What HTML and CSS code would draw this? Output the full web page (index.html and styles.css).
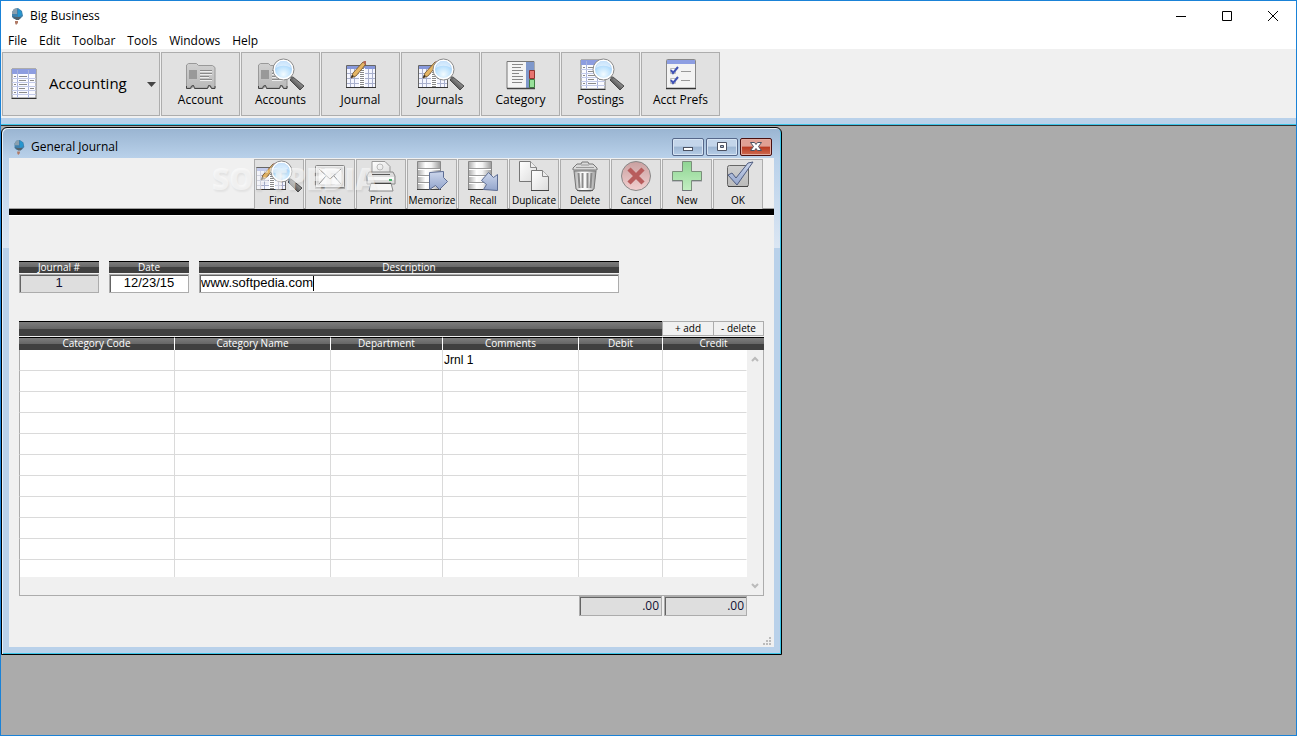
FILE: index.html
```
<!DOCTYPE html>
<html lang="en">
<head>
    <meta charset="utf-8">
    <title>Big Business</title>
    <meta name="viewport" content="width=device-width, initial-scale=1.0">
    <link rel="stylesheet" href="styles.css">
</head>
<body>
    <svg class="sprite" aria-hidden="true">
        <defs>
            <linearGradient id="gGray" x1="0" y1="0" x2="0" y2="1"><stop offset="0" stop-color="#d0d0d0"/><stop offset="1" stop-color="#bababa"/></linearGradient>
            <linearGradient id="gPaper" x1="0" y1="0" x2="1" y2="1"><stop offset="0" stop-color="#fff"/><stop offset="1" stop-color="#dcdcdc"/></linearGradient>
            <linearGradient id="gBlue" x1="0" y1="0" x2="0" y2="1"><stop offset="0" stop-color="#cdd7ec"/><stop offset="1" stop-color="#93a5cc"/></linearGradient>
            <linearGradient id="gGreen" x1="0" y1="0" x2="0" y2="1"><stop offset="0" stop-color="#8fd593"/><stop offset="1" stop-color="#c3efc2"/></linearGradient>
            <linearGradient id="gRed" x1="0" y1="0" x2="0" y2="1"><stop offset="0" stop-color="#c9a0a0"/><stop offset="1" stop-color="#f2d0d0"/></linearGradient>
            <linearGradient id="gDisk" x1="0" y1="0" x2="1" y2="0"><stop offset="0" stop-color="#aaa"/><stop offset=".35" stop-color="#fff"/><stop offset=".6" stop-color="#f4f4f4"/><stop offset="1" stop-color="#999"/></linearGradient>
            <linearGradient id="gHandle" x1="0" y1="1" x2="1" y2="0"><stop offset="0" stop-color="#111"/><stop offset=".6" stop-color="#888"/><stop offset="1" stop-color="#333"/></linearGradient>
            <radialGradient id="gGlass" cx=".5" cy=".75" r=".75"><stop offset="0" stop-color="#f4fcff"/><stop offset=".5" stop-color="#bfe3fd"/><stop offset="1" stop-color="#85bdf5"/></radialGradient>
        </defs>
        <symbol id="logo" viewBox="0 0 16 18">
            <path d="M3 5l2-3 4-1 4 3 1 5-3 3H5L3 10z" fill="#3f81ad"/>
            <path d="M3 5l2-3 3-1v6H3z" fill="#8a9fae"/>
            <path d="M9 2l3 2 1 4-4 2z" fill="#2696cf"/>
            <path d="M3 9l3 1h6l-2 3H7z" fill="#53616b"/>
            <path d="M6 14h3v2l-2 2-1-2z" fill="#b07a66"/>
        </symbol>
        <symbol id="lens" viewBox="0 0 48 34">
            <path d="M36 19l11 9-4 4-10-10z" fill="url(#gHandle)" stroke="#333" stroke-width=".8"/>
            <path d="M32 17l4 4" stroke="#666" stroke-width="3"/>
            <circle cx="26.500" cy="11.500" r="9.500" fill="url(#gGlass)" stroke="#fff" stroke-width="2"/>
            <circle cx="26.500" cy="11.500" r="10.500" fill="none" stroke="#8a8a8a"/>
            <path d="M19 10a7.500 7 0 0 1 15 0c-5-3-10-3-15 0z" fill="#fff" opacity=".5"/>
        </symbol>
        <symbol id="folder" viewBox="0 0 48 34">
            <path d="M9.500 30V7l2-1.500h8l2 2h14l2.500 2V30h-4l-1-3-2 3H18l-2-3-1 3z" fill="url(#gGray)" stroke="#999"/>
            <path d="M9.500 28v2.500h4l1-2.500 2-.5 1 3h13l1-3 2 .5 1 2.500h3.500V28" fill="none" stroke="#444"/>
            <path d="M12 12h8v9h-8z" fill="#999"/>
            <path d="M23 12.500h12M23 15.500h12M23 18.500h9M23 21.500h12" stroke="#8a8a8a"/>
            <path d="M23 13.500h12M23 16.500h12M23 19.500h9M23 22.500h12" stroke="#eee"/>
        </symbol>
        <symbol id="ledger" viewBox="0 0 48 34">
            <path d="M9.500 7.500h29v22h-29z" fill="#f5f6ff" stroke="#666"/>
            <path d="M10 8h28v3H10z" fill="#8798da"/>
            <path d="M10 15.500h28M10 20.500h28M10 25.500h28M13.500 11v18M17.500 11v18M31.500 11v18M35.500 11v18" stroke="#a9b0cd"/>
            <path d="M9 29.500h30" stroke="#333"/>
            <path d="M25 10v19" stroke="#fff" stroke-width="6"/>
            <path d="M25 10v19" stroke="#888" stroke-width="4" stroke-dasharray="1 1"/>
            <path d="M14 20l2-5L26 4l3 2-10 12z" fill="#e5b565" stroke="#6d4d22" stroke-width=".8"/>
            <path d="M26 4l1-1h2v2l-1 2z" fill="#b5685a"/>
            <path d="M14 20l1-3 2 1z" fill="#222"/>
        </symbol>
        <symbol id="sheet" viewBox="0 0 48 34">
            <path d="M12 2h24v29H12z" fill="#fbfbff" stroke="#777"/>
            <path d="M12 2h24v5H12z" fill="#8d9de0"/>
            <path d="M17.500 3v28M28.500 3v28" stroke="#aab4dc"/>
            <path d="M12 11.500h24M12 15.500h24M12 19.500h24M12 23.500h24M12 27.500h24" stroke="#c3cae8"/>
            <path d="M19 9.500h8M19 13.500h7M19 17.500h8M19 21.500h6M19 25.500h8M30 13.500h4M30 21.500h4M14 9.500h2M14 17.500h2M14 25.500h2" stroke="#8a8a8a"/>
            <path d="M11.500 31.500h25" stroke="#333"/>
        </symbol>
        <symbol id="find" viewBox="0 0 48 34">
            <use href="#ledger" x="-8" y="0" width="48" height="34"/>
            <use href="#lens" width="48" height="34"/>
        </symbol>
        <symbol id="accounts" viewBox="0 0 48 34">
            <use href="#folder" x="-8" y="0" width="48" height="34"/>
            <use href="#lens" width="48" height="34"/>
        </symbol>
        <symbol id="postings" viewBox="0 0 48 34">
            <use href="#sheet" x="-8" y="0" width="48" height="34"/>
            <use href="#lens" width="48" height="34"/>
        </symbol>
        <symbol id="category" viewBox="0 0 48 34">
            <path d="M10 3.500h27v27H10z" fill="#f4f4f4" stroke="#777"/>
            <path d="M29 4h8v26h-8z" fill="#7f98cb"/>
            <path d="M32.500 12.500h5v8h-5z" fill="#e87470" stroke="#8f3330"/>
            <path d="M32.500 21.500h5v8h-5z" fill="#98e09a" stroke="#3f7f42"/>
            <path d="M15 6.500h11M15 9.500h9M15 12.500h11M15 15.500h7M15 18.500h11M15 21.500h11M15 24.500h10" stroke="#888"/>
            <path d="M10 30.500h28" stroke="#444" stroke-width="1.500"/>
        </symbol>
        <symbol id="prefs" viewBox="0 0 48 34">
            <rect x="9.500" y="1.500" width="29" height="29" rx="1" fill="#f3f3f3" stroke="#888"/>
            <path d="M10 2h28v4H10z" fill="#8d9ee2"/>
            <path d="M9 30.500h30" stroke="#333" stroke-width="1.500"/>
            <path d="M13.500 10.500h5v5h-5zM13.500 20.500h5v5h-5z" fill="#fff" stroke="#bbb"/>
            <path d="M14 12l2 3 5-6M14 22l2 3 5-6" fill="none" stroke="#4052b4" stroke-width="2"/>
            <path d="M24 13.500h10M24 22.500h9" stroke="#999"/>
        </symbol>
        <symbol id="note" viewBox="0 0 48 34">
            <rect x="9.500" y="5.500" width="29" height="22" rx="1" fill="#ececec" stroke="#888"/>
            <rect x="12" y="8" width="24" height="17" fill="#fafafa" stroke="#ccc"/>
            <path d="M13 9l11 10L35 9M13 24l7-8M35 24l-7-8" fill="none" stroke="#999"/>
            <path d="M9 28h30" stroke="#777"/>
        </symbol>
        <symbol id="print" viewBox="0 0 48 34">
            <path d="M15 14V1.500h13l5 5V14z" fill="url(#gPaper)" stroke="#999"/>
            <circle cx="23" cy="7" r="3" fill="none" stroke="#bbb"/>
            <path d="M12 12h24l2 4v8H10v-8z" fill="#ddd" stroke="#888"/>
            <path d="M15 14.500h18" stroke="#555"/>
            <path d="M11 17h26v3H11z" fill="#f8f8f8"/>
            <path d="M32 20h3" stroke="#49b36b" stroke-width="2"/>
            <path d="M14 23h20l2 8H12z" fill="#f6f6f6" stroke="#888"/>
            <path d="M14 23.500h20" stroke="#444"/>
        </symbol>
        <symbol id="disk" viewBox="0 0 48 34">
            <path d="M9.500 1.500h23v28h-23z" fill="url(#gDisk)" stroke="#888"/>
            <path d="M10 8.500h22M10 15.500h22M10 22.500h22" stroke="#999"/>
            <path d="M10 9.500h22M10 16.500h22M10 23.500h22" stroke="#fff"/>
            <path d="M9 29.500h24" stroke="#444"/>
        </symbol>
        <symbol id="memorize" viewBox="0 0 48 34">
            <use href="#disk" width="48" height="34"/>
            <path d="M21.500 12.500l14-1v6l4 4-8 8-4-4-6 4z" fill="url(#gBlue)" stroke="#5d6d94"/>
        </symbol>
        <symbol id="recall" viewBox="0 0 48 34">
            <use href="#disk" width="48" height="34"/>
            <path d="M38.500 30.500l-14-1 3-5-5-4 7-8 5 5 4-3z" fill="url(#gBlue)" stroke="#5d6d94"/>
        </symbol>
        <symbol id="duplicate" viewBox="0 0 48 34">
            <path d="M9.500 1.500h11l6 6v14h-17z" fill="url(#gPaper)" stroke="#777"/>
            <path d="M20.500 1.500v6h6" fill="#eee" stroke="#888"/>
            <path d="M21.500 10.500h11l6 6v14h-17z" fill="url(#gPaper)" stroke="#777"/>
            <path d="M32.500 10.500v6h6" fill="#eee" stroke="#888"/>
            <path d="M21 30.500h18" stroke="#444"/>
        </symbol>
        <symbol id="trash" viewBox="0 0 48 34">
            <path d="M13 11h22l-2 18-3 2H18l-3-2z" fill="url(#gDisk)" stroke="#777"/>
            <path d="M17.500 13l1 15M21.500 13v15M26.500 13v15M30.500 13l-1 15" stroke="#8a8a8a" stroke-width="2"/>
            <path d="M12 10V8l4-4h4l1-2h6l1 2h4l4 4v2z" fill="#d9d9d9" stroke="#777"/>
            <path d="M20 5h8M15 7.500h18" stroke="#999"/>
            <path d="M16 30.500h16" stroke="#555"/>
        </symbol>
        <symbol id="cancel" viewBox="0 0 48 34">
            <circle cx="24" cy="16" r="14.500" fill="url(#gRed)" stroke="#888"/>
            <path d="M17 9l14 14M31 9L17 23" stroke="#b85c5c" stroke-width="4.500"/>
        </symbol>
        <symbol id="new" viewBox="0 0 48 34">
            <path d="M19.500 1.500h9v10h10v9h-10v10h-9v-10h-10v-9h10z" fill="url(#gGreen)" stroke="#7b8f7b"/>
            <path d="M19 30.500h10M9 21h10M29 21h10" stroke="#667" opacity=".6"/>
        </symbol>
        <symbol id="ok" viewBox="0 0 48 34">
            <rect x="13.500" y="5.500" width="21" height="21" rx="2" fill="url(#gGray)" stroke="#666"/>
            <path d="M14 26.500h20" stroke="#444"/>
            <path d="M14 15l4-2 4 5L34 3l5-1-16 23z" fill="url(#gBlue)" stroke="#4f5c80"/>
        </symbol>
    </svg>

    <header class="titlebar">
        <svg class="logo"><use href="#logo"/></svg>
        <h1>Big Business</h1>
        <div class="sysbuttons">
            <button aria-label="Minimize"><svg viewBox="0 0 10 10"><path d="M0 5.500h10"/></svg></button>
            <button aria-label="Maximize"><svg viewBox="0 0 10 10"><path d="M.5.5h9v9h-9z"/></svg></button>
            <button aria-label="Close"><svg viewBox="0 0 10 10"><path d="M0 0l10 10M10 0L0 10"/></svg></button>
        </div>
    </header>
    <nav class="menubar">
        <button>File</button>
        <button>Edit</button>
        <button>Toolbar</button>
        <button>Tools</button>
        <button>Windows</button>
        <button>Help</button>
    </nav>
    <div class="toolbar">
        <div class="module">
            <svg class="icon-module" viewBox="11 1 26 32"><use href="#sheet" width="48" height="34"/></svg>
            <select aria-label="Module">
                <option>Accounting</option>
            </select>
            <svg class="arrow" viewBox="0 0 9 5"><path d="M0 0h9L4.500 5z"/></svg>
        </div>
        <button class="tool"><svg class="icon"><use href="#folder"/></svg>Account</button>
        <button class="tool"><svg class="icon"><use href="#accounts"/></svg>Accounts</button>
        <button class="tool"><svg class="icon"><use href="#ledger"/></svg>Journal</button>
        <button class="tool"><svg class="icon"><use href="#find"/></svg>Journals</button>
        <button class="tool"><svg class="icon"><use href="#category"/></svg>Category</button>
        <button class="tool"><svg class="icon"><use href="#postings"/></svg>Postings</button>
        <button class="tool"><svg class="icon"><use href="#prefs"/></svg>Acct Prefs</button>
    </div>

    <main class="desktop">
        <section class="window">
            <div class="window-title">
                <svg class="logo"><use href="#logo"/></svg>
                <h2>General Journal</h2>
                <button class="cap" aria-label="Minimize"><svg viewBox="0 0 12 10"><rect x="1.500" y="5.500" width="9" height="3"/></svg></button>
                <button class="cap" aria-label="Maximize"><svg viewBox="0 0 12 10"><path d="M1.500.5h9v8h-9z"/><path class="hole" d="M4.500 3.500h3v2h-3z"/></svg></button>
                <button class="cap close" aria-label="Close"><svg viewBox="0 0 12 10"><path d="M.5.5h4L6 2.500l1.500-2h4L8.500 4.500l3 4h-4L6 6.500l-1.500 2h-4l3-4z"/></svg></button>
            </div>
            <div class="pane">
                <div class="window-tools">
                    <button class="tool small"><svg class="icon"><use href="#find"/></svg>Find</button>
                    <button class="tool small"><svg class="icon"><use href="#note"/></svg>Note</button>
                    <button class="tool small"><svg class="icon"><use href="#print"/></svg>Print</button>
                    <button class="tool small"><svg class="icon"><use href="#memorize"/></svg>Memorize</button>
                    <button class="tool small"><svg class="icon"><use href="#recall"/></svg>Recall</button>
                    <button class="tool small"><svg class="icon"><use href="#duplicate"/></svg>Duplicate</button>
                    <button class="tool small"><svg class="icon"><use href="#trash"/></svg>Delete</button>
                    <button class="tool small"><svg class="icon"><use href="#cancel"/></svg>Cancel</button>
                    <button class="tool small"><svg class="icon"><use href="#new"/></svg>New</button>
                    <button class="tool small"><svg class="icon"><use href="#ok"/></svg>OK</button>
                    <span class="watermark">SOFTPEDIA</span>
                </div>
                <form class="journal">
                    <div class="fields">
                        <div class="field">
                            <label for="number">Journal #</label>
                            <input id="number" class="box locked" value="1" readonly>
                        </div>
                        <div class="field">
                            <label for="date">Date</label>
                            <input id="date" class="box" value="12/23/15">
                        </div>
                        <div class="field wide">
                            <label for="description">Description</label>
                            <div class="box typing">
                                <input id="description" value="www.softpedia.com">
                                <span class="caret"></span>
                            </div>
                        </div>
                    </div>
                    <div class="linebar">
                        <button type="button">+ add</button>
                        <button type="button">- delete</button>
                    </div>
                    <table class="lines">
                        <colgroup>
                            <col class="c-code"><col class="c-name"><col class="c-dept"><col class="c-comments"><col class="c-money"><col class="c-money"><col class="c-scroll">
                        </colgroup>
                        <thead>
                            <tr><th>Category Code</th><th>Category Name</th><th>Department</th><th>Comments</th><th>Debit</th><th colspan="2">Credit</th></tr>
                        </thead>
                        <tbody>
                            <tr>
                                <td></td><td></td><td></td><td>Jrnl 1</td><td></td><td></td>
                                <td class="scroll" rowspan="12">
                                    <div class="scrollbar">
                                        <svg viewBox="0 0 8 6"><path d="M1 5l3-3 3 3"/></svg>
                                        <svg viewBox="0 0 8 6"><path d="M1 1l3 3 3-3"/></svg>
                                    </div>
                                </td>
                            </tr>
                            <tr><td></td><td></td><td></td><td></td><td></td><td></td></tr>
                            <tr><td></td><td></td><td></td><td></td><td></td><td></td></tr>
                            <tr><td></td><td></td><td></td><td></td><td></td><td></td></tr>
                            <tr><td></td><td></td><td></td><td></td><td></td><td></td></tr>
                            <tr><td></td><td></td><td></td><td></td><td></td><td></td></tr>
                            <tr><td></td><td></td><td></td><td></td><td></td><td></td></tr>
                            <tr><td></td><td></td><td></td><td></td><td></td><td></td></tr>
                            <tr><td></td><td></td><td></td><td></td><td></td><td></td></tr>
                            <tr><td></td><td></td><td></td><td></td><td></td><td></td></tr>
                            <tr class="cut"><td></td><td></td><td></td><td></td><td></td><td></td></tr>
                            <tr class="rest"><td colspan="6"></td></tr>
                        </tbody>
                    </table>
                    <div class="totals">
                        <input class="box locked" aria-label="Total debit" value=".00" readonly>
                        <input class="box locked" aria-label="Total credit" value=".00" readonly>
                    </div>
                    <svg class="grip" viewBox="0 0 8 8"><path d="M6 0h2v2H6zM3 3h2v2H3zM6 3h2v2H6zM0 6h2v2H0zM3 6h2v2H3zM6 6h2v2H6z"/></svg>
                </form>
            </div>
        </section>
    </main>
</body>
</html>
```
FILE: styles.css
```
* {
    box-sizing: border-box;
}
body {
    margin: 0;
    min-height: 100vh;
    display: flex;
    flex-direction: column;
    border: 1px solid #1a82d7;
    background: #fff;
    color: #000;
    font: 12px/16px "Open Sans", "Noto Sans", sans-serif;
}
button, input, select {
    font: inherit;
    color: inherit;
    margin: 0;
    padding: 0;
    border: none;
    background: none;
    border-radius: 0;
    outline: none;
}
svg {
    display: block;
    flex: none;
}
h1, h2 {
    margin: 0;
    font-size: 12px;
    font-weight: normal;
}
.sprite {
    position: absolute;
    width: 0;
    height: 0;
}

/* main window caption */
.titlebar {
    display: flex;
    align-items: center;
    height: 30px;
    padding-left: 8px;
}
.logo {
    width: 16px;
    height: 18px;
    margin-right: 5px;
}
.sysbuttons {
    display: flex;
    margin-left: auto;
}
.sysbuttons button {
    display: flex;
    align-items: center;
    justify-content: center;
    width: 46px;
    height: 28px;
}
.sysbuttons svg {
    width: 10px;
    height: 10px;
    fill: none;
    stroke: #000;
}
.menubar {
    display: flex;
    height: 18px;
    padding: 1px 0 0 7px;
    gap: 12px;
}

/* toolbar */
.toolbar {
    display: flex;
    gap: 1px;
    padding: 3px 1px 2px;
    background: #f0f0f0;
    height: 69px;
}
.module, .tool {
    border: 1px solid #adadad;
    background: #e1e1e1;
    height: 64px;
}
.module {
    display: flex;
    align-items: center;
    width: 158px;
    padding: 0 3px 0 8px;
}
.icon-module {
    width: 26px;
    height: 32px;
}
.module select {
    appearance: none;
    flex: 1;
    min-width: 0;
    margin-left: 12px;
    padding-bottom: 2px;
    font-size: 15px;
    line-height: 24px;
}
.arrow {
    width: 9px;
    height: 5px;
    fill: #444;
}
.tool {
    display: flex;
    flex-direction: column;
    align-items: center;
    width: 79px;
    padding-top: 5px;
    white-space: nowrap;
}
.icon {
    width: 48px;
    height: 34px;
}

/* MDI area */
.desktop {
    position: relative;
    flex: 1;
    border-top: 1px solid #333;
    background: #ababab;
    box-shadow: 0 -1px 0 #3dc5e8;
    margin-top: 7px;
}
.desktop::before {
    content: "";
    position: absolute;
    left: 0;
    right: 0;
    top: -8px;
    height: 6px;
    background: #b9d1ea;
}
.window {
    position: absolute;
    left: 0;
    top: 1px;
    width: 781px;
    max-width: 100%;
    padding: 0 7px 7px;
    border: 1px solid #000;
    border-radius: 6px 6px 0 0;
    background: linear-gradient(#99b4d1, #b9d1ea 30px, #dbe6f3 120px, #b9d1ea 120px);
    box-shadow: inset 1px 1px 0 #e8f2fb, inset -1px -1px 0 #3dc5e8;
}
.window-title {
    display: flex;
    align-items: center;
    height: 30px;
    padding: 7px 2px 0;
    gap: 2px;
}
.window-title .logo {
    height: 16px;
    margin-right: 2px;
}
.window-title h2 {
    margin-right: auto;
}
.cap {
    display: flex;
    align-items: center;
    justify-content: center;
    width: 32px;
    height: 18px;
    border: 1px solid #56688a;
    border-radius: 2px;
    background: linear-gradient(#c3d5ea 45%, #9db6d3 50%, #b6cde6);
    box-shadow: inset 0 0 0 1px #d6e4f3;
}
.cap svg {
    width: 12px;
    height: 10px;
    fill: #fff;
    stroke: #4b5161;
}
.cap .hole {
    fill: #a6bad3;
}
.close {
    border-color: #4a1010;
    background: linear-gradient(#e0a094 45%, #b83a22 50%, #cf6b50);
    box-shadow: inset 0 0 0 1px #e2aba0;
}

.pane {
    background: #f0f0f0;
}
.window-tools {
    position: relative;
    display: flex;
    justify-content: flex-end;
    gap: 1px;
    height: 58px;
    padding: 1px 11px 0;
    border-bottom: 1px solid #fff;
    background: linear-gradient(#f0f0f0 50px, #a0a0a0 50px, #a0a0a0 51px, #000 51px);
}
.small {
    width: 50px;
    height: 50px;
    padding-top: 0;
    border-bottom: none;
    font-size: 10px;
    line-height: 12px;
}
.watermark {
    position: absolute;
    left: 203px;
    top: 7px;
    font: 800 30px/28px "Open Sans", sans-serif;
    color: rgba(255, 255, 255, 0.5);
    text-shadow: 1px 2px 2px rgba(0, 0, 0, 0.06);
    pointer-events: none;
}

/* journal entry */
.journal {
    padding: 45px 10px 2px;
}
.fields {
    display: flex;
    gap: 10px;
    margin-bottom: 28px;
}
.field {
    width: 80px;
}
.wide {
    width: 420px;
}
.field label, .lines th, .linebar {
    border-top: 1px solid #000;
    background: linear-gradient(#7d7d7d, #666 50%, #404040 50%);
    color: #fff;
    font-size: 10px;
    font-weight: normal;
    line-height: 10px;
    text-align: center;
}
.field label {
    display: block;
    height: 12px;
    margin-bottom: 1px;
}
.box {
    display: block;
    width: 100%;
    height: 19px;
    padding-bottom: 2px;
    border: 1px solid #acacac;
    background: #fff;
    box-shadow: inset 1px 1px 0 #646464;
    font: 13px/16px "Liberation Sans", Arial, sans-serif;
    text-align: center;
}
.locked {
    background: #dedede;
    color: #113;
}
.typing {
    display: flex;
    padding: 0 1px;
}
.typing input {
    field-sizing: content;
    height: 16px;
}
.caret {
    width: 1px;
    height: 15px;
    margin-top: 1px;
    background: #000;
}
.linebar {
    display: flex;
    justify-content: flex-end;
    height: 15px;
    margin-bottom: 1px;
}
.linebar button {
    width: 51px;
    height: 15px;
    margin-top: -1px;
    padding-bottom: 2px;
    border: 1px solid #acacac;
    border-right: none;
    background: #f0f0f0;
    color: #000;
}
.linebar button:last-child {
    border-right: 1px solid #acacac;
}
.lines {
    width: 100%;
    table-layout: fixed;
    border-collapse: separate;
    border-spacing: 0;
    border-bottom: 1px solid #acacac;
}
.c-code, .c-name {
    width: 156px;
}
.c-dept {
    width: 112px;
}
.c-comments {
    width: 136px;
}
.c-money {
    width: 84px;
}
.c-scroll {
    width: 17px;
}
.lines th {
    height: 13px;
    padding: 0;
    border-right: 1px solid #fff;
    vertical-align: top;
}
.lines th:last-child {
    border-right: none;
}
.lines td {
    height: 21px;
    padding: 0 1px;
    border-right: 1px solid #dadada;
    border-bottom: 1px solid #dadada;
    background: #fff;
    font: 12px/16px "Liberation Sans", Arial, sans-serif;
}
.lines td:first-child {
    border-left: 1px solid #acacac;
}
.lines td:nth-child(6) {
    border-right-color: #fff;
}
.lines .cut td {
    height: 17px;
    border-bottom: none;
}
.lines .rest td {
    height: 18px;
    border-right: none;
    border-bottom: none;
    background: #f0f0f0;
}
.lines .scroll {
    padding: 0;
    border-left: none;
    border-right-color: #acacac;
    border-bottom: none;
    background: #f0f0f0;
}
.scrollbar {
    display: flex;
    flex-direction: column;
    align-items: center;
    justify-content: space-between;
    height: 245px;
    padding: 6px 0;
}
.scrollbar svg {
    width: 8px;
    height: 6px;
    fill: none;
    stroke: #bbb;
    stroke-width: 2;
}
.totals {
    display: flex;
    justify-content: flex-end;
    gap: 2px;
    padding-right: 17px;
}
.totals .box {
    width: 83px;
    height: 20px;
    padding-right: 2px;
    font: 12px/16px "Open Sans", sans-serif;
    text-align: right;
}
.grip {
    width: 8px;
    height: 8px;
    margin: 21px -7px 0 auto;
    fill: #bbb;
}
```
